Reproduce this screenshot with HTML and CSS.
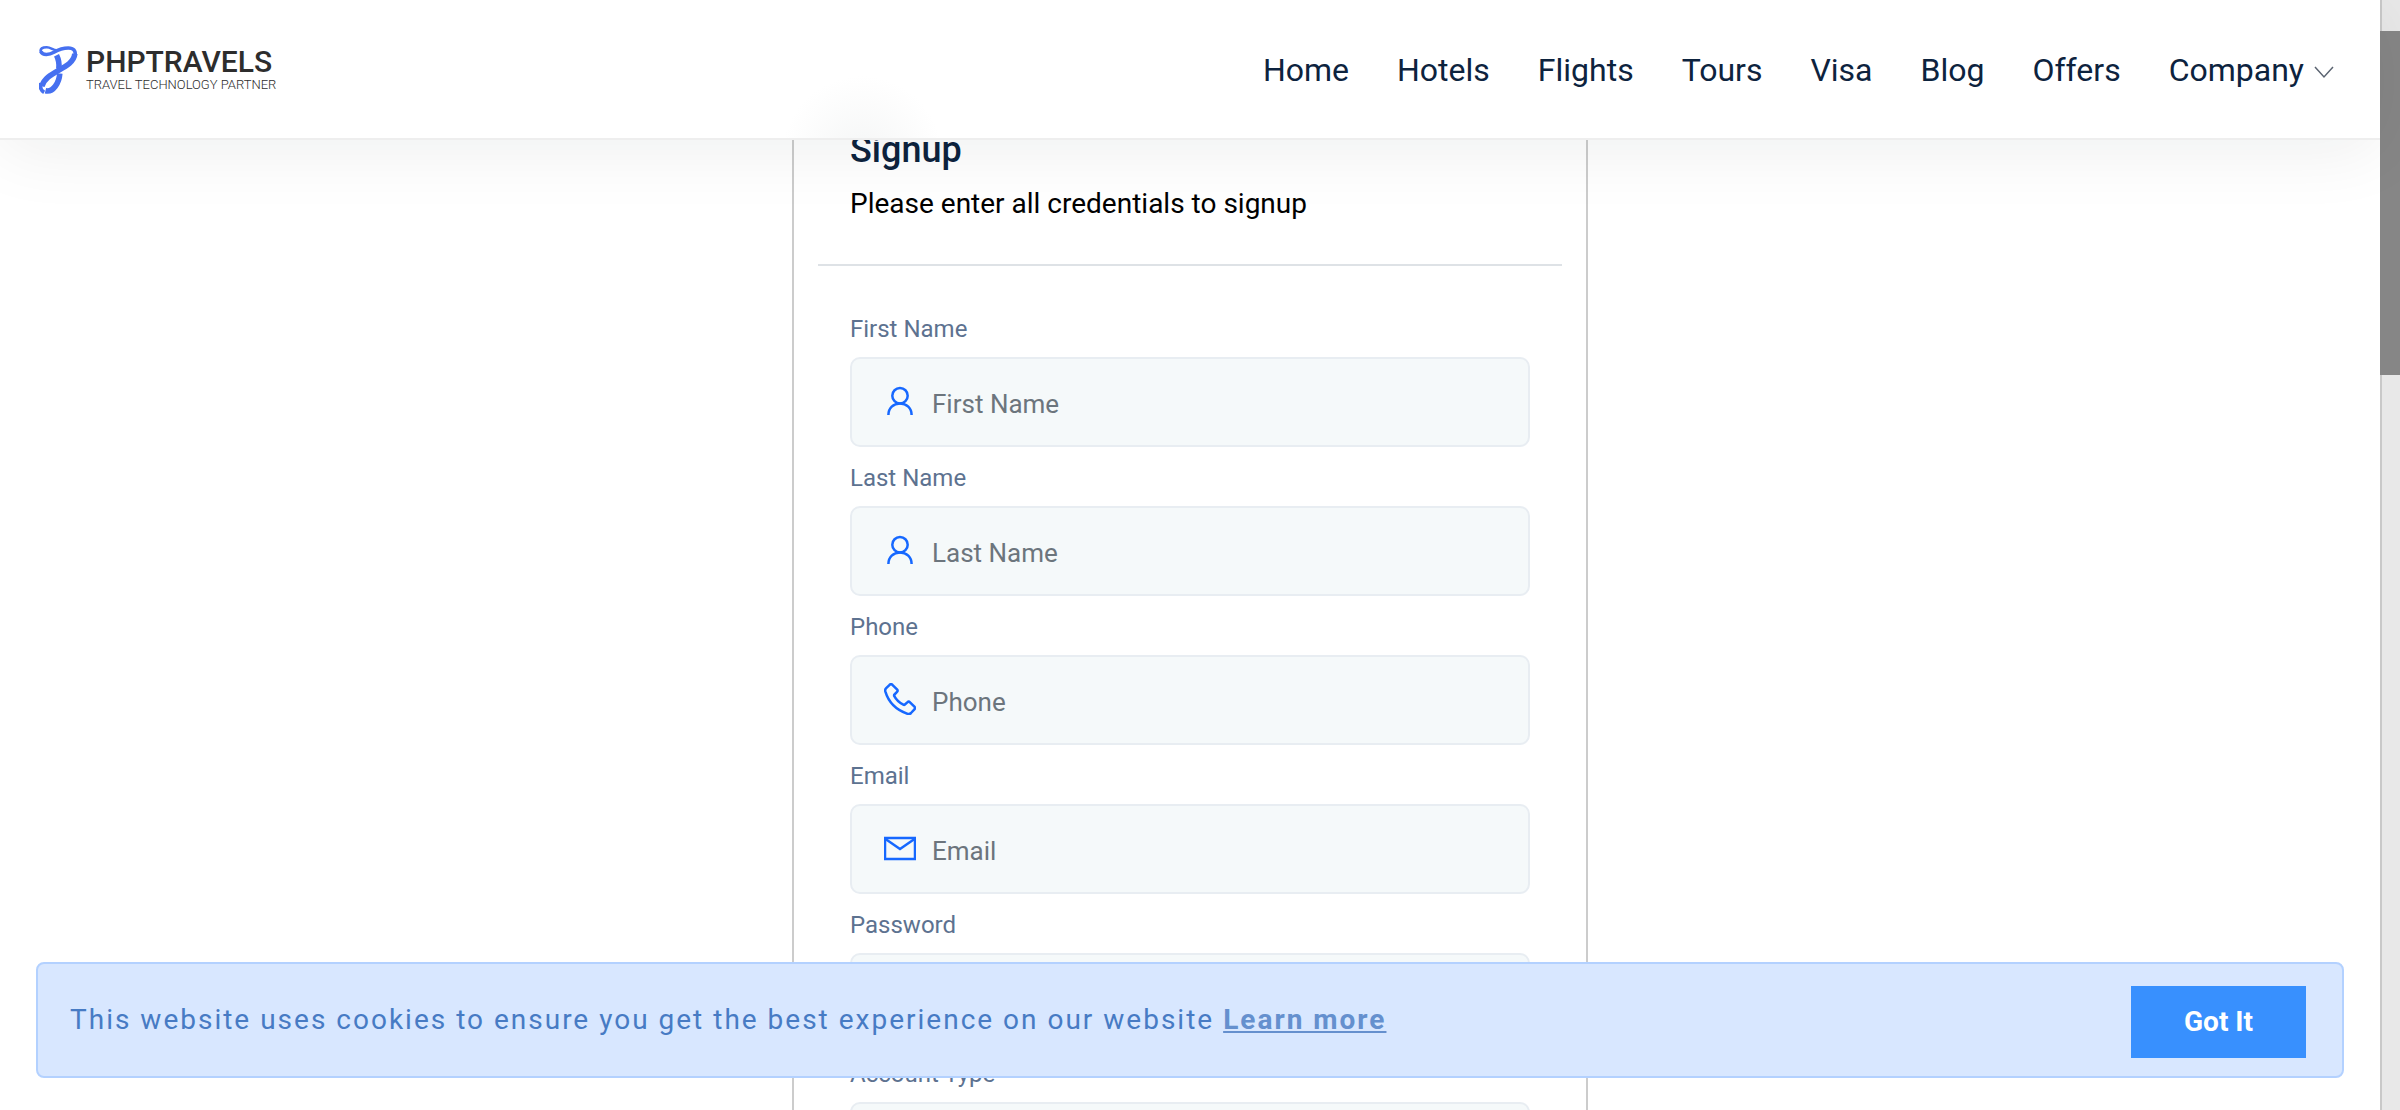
FILE: index.html
```html
<!DOCTYPE html>
<html lang="en">
<head>
<meta charset="utf-8">
<meta name="viewport" content="width=device-width, initial-scale=1">
<title>Signup - PHPTRAVELS</title>
<link rel="stylesheet" href="styles.css">
</head>
<body>
<svg class="sprite" aria-hidden="true">
  <symbol id="icon-user" viewBox="0 0 32 32">
    <circle cx="16" cy="10.7" r="7.7"/>
    <path d="M4.400 30c0-6.800 5-11.500 11.600-11.500S27.600 23.200 27.600 30"/>
  </symbol>
  <symbol id="icon-phone" viewBox="0 0 32 32">
    <path d="M5.600 1.800Q7 .6 8.400 1.800L13 6.400Q14.200 7.700 13 9L10.500 11.500Q9.800 12.200 10.300 13.200C12.500 17.300 15.500 19.800 19.300 21.700Q20.200 22.100 20.900 21.500L23.300 19.300Q24.700 18 26 19.300L30.400 23.600Q31.700 25 30.400 26.400L27 30Q25.600 31.400 23.700 30.900C12 27 4.500 19 1.300 8.400Q.8 6.600 2.200 5.200Z"/>
  </symbol>
  <symbol id="icon-mail" viewBox="0 0 32 32">
    <path d="M1 6h30v21H1z"/><path d="M1.500 7 16 17 30.500 7"/>
  </symbol>
</svg>
<div class="page">
  <header class="header">
    <a class="logo" href="#" aria-label="PHPTRAVELS">
      <svg class="logo-mark" viewBox="17 14 118 147" aria-hidden="true">
        <path class="thin" d="M23 35C17 21 28 18 40 18S60 27 70 27"/>
        <path class="mid" d="M22 31C28 44 48 41 62 33S90 20 106 20S129 28 127 44"/>
        <path class="wide" d="M126 38C121 86 36 90 25 138"/>
        <path class="wide" d="M70 42Q80 62 77 84"/>
        <path class="mid" d="M22 128C17 144 24 151 32 156"/>
        <path class="wide" d="M36 151C60 157 78 126 80 98"/>
      </svg>
      <span class="logo-text">
        <span class="logo-name">PHPTRAVELS</span>
        <span class="logo-tag">TRAVEL TECHNOLOGY PARTNER</span>
      </span>
    </a>
    <nav class="nav">
      <a href="#">Home</a>
      <a href="#">Hotels</a>
      <a href="#">Flights</a>
      <a href="#">Tours</a>
      <a href="#">Visa</a>
      <a href="#">Blog</a>
      <a href="#">Offers</a>
      <a href="#">Company<svg class="chevron" viewBox="0 0 20 18" aria-hidden="true"><path d="M1 6l9 10 9-10"/></svg></a>
    </nav>
  </header>

  <main class="main">
    <form class="card">
      <div class="card-head">
        <h1>Signup</h1>
        <p>Please enter all credentials to signup</p>
      </div>
      <div class="fields">
        <div class="field">
          <label for="first">First Name</label>
          <div class="control"><svg class="icon" aria-hidden="true"><use href="#icon-user"/></svg><input id="first" type="text" placeholder="First Name"></div>
        </div>
        <div class="field">
          <label for="last">Last Name</label>
          <div class="control"><svg class="icon" aria-hidden="true"><use href="#icon-user"/></svg><input id="last" type="text" placeholder="Last Name"></div>
        </div>
        <div class="field">
          <label for="phone">Phone</label>
          <div class="control"><svg class="icon" aria-hidden="true"><use href="#icon-phone"/></svg><input id="phone" type="tel" placeholder="Phone"></div>
        </div>
        <div class="field">
          <label for="email">Email</label>
          <div class="control"><svg class="icon" aria-hidden="true"><use href="#icon-mail"/></svg><input id="email" type="email" placeholder="Email"></div>
        </div>
        <div class="field">
          <label for="password">Password</label>
          <div class="control"><input id="password" type="password"></div>
        </div>
        <div class="field">
          <label for="type">Account Type</label>
          <div class="control"><select id="type"><option></option></select></div>
        </div>
      </div>
    </form>
  </main>

  <div class="cookies" role="status">
    <p>This website uses cookies to ensure you get the best experience on our website <a href="#">Learn more</a></p>
    <button type="button">Got It</button>
  </div>
  <div class="scrollbar" aria-hidden="true"><div class="thumb"></div></div>
</div>
</body>
</html>
```
FILE: styles.css
```css
* { box-sizing: border-box; }
body {
  margin: 0;
  background: #fff;
  font-family: Roboto, "Liberation Sans", sans-serif;
  color: #0d233e;
}
h1, p { margin: 0; }
a { color: inherit; text-decoration: none; }
.sprite { position: absolute; width: 0; height: 0; }

.page {
  position: relative;
  height: 100vh;
  padding-right: 20px;
  overflow: hidden;
}

/* Top bar, over the scrolled form */
.header {
  position: absolute;
  z-index: 2;
  top: 0;
  left: 0;
  right: 20px;
  height: 140px;
  padding: 2px 46px 0 39px;
  display: flex;
  align-items: center;
  justify-content: space-between;
  background: radial-gradient(circle 80px at 862px 156px, #f5f6f6, #fff) #fff;
  border-bottom: 2px solid #eee;
  box-shadow: 0 10px 70px rgba(14, 32, 32, 0.07);
}
.logo { display: flex; align-items: center; gap: 8px; }
.logo-mark { width: 39px; height: 48px; fill: none; stroke: #4670f0; }
.thin { stroke-width: 8; }
.mid { stroke-width: 11; }
.wide { stroke-width: 17; }
.logo-text { display: flex; flex-direction: column; color: #2d2d2d; }
.logo-name { font-size: 30px; line-height: 30px; font-weight: 500; }
.logo-tag { font-size: 13px; line-height: 16px; font-weight: 300; }
.nav { display: flex; gap: 48px; font-size: 32px; line-height: 40px; }
.nav a { display: flex; align-items: center; gap: 10px; }
.chevron { width: 20px; height: 18px; fill: none; stroke: #5b6471; stroke-width: 1.5; }

/* Signup form */
.main { display: flex; justify-content: center; }
.card {
  width: 796px;
  padding: 0 24px;
  border: 2px solid #ccc;
  border-top: 0;
}
.card-head { padding: 128px 32px 38px; border-bottom: 2px solid #dee2e6; }
.card-head h1 { font-size: 36px; line-height: 44px; font-weight: 500; }
.card-head p { margin-top: 10px; font-size: 28px; line-height: 44px; color: #000; }
.fields { padding: 42px 32px; }
.field { display: flex; flex-direction: column; padding-bottom: 10px; }
.field label { padding: 6px 0 13px; font-size: 24px; line-height: 30px; color: #5d7290; }
.control {
  height: 90px;
  padding: 0 32px 2px;
  display: flex;
  align-items: center;
  gap: 16px;
  background: #f5f9fa;
  border: 2px solid #e8edf2;
  border-radius: 10px;
}
.icon { width: 32px; height: 32px; fill: none; stroke: #1668ff; stroke-width: 2.5; }
.control input, .control select {
  flex: 1;
  min-width: 0;
  height: 100%;
  padding: 6px 0 0;
  border: 0;
  outline: 0;
  appearance: none;
  background: transparent;
  font: 26px/32px Roboto, sans-serif;
  color: #5d6975;
}
.control input::placeholder { color: #6c757d; opacity: 1; }

/* Cookie notice */
.cookies {
  position: absolute;
  z-index: 3;
  left: 36px;
  right: 56px;
  bottom: 32px;
  height: 116px;
  padding: 22px 36px 0 32px;
  display: flex;
  align-items: flex-start;
  justify-content: space-between;
  background: #d8e7ff;
  border: 2px solid #b3d1ff;
  border-radius: 8px;
}
.cookies p { padding-top: 14px; font-size: 28px; line-height: 40px; letter-spacing: 2px; color: #477bc4; }
.cookies a { font-weight: 700; color: #6590ce; text-decoration: underline; }
.cookies button {
  width: 175px;
  height: 72px;
  border: 0;
  background: #3890fe;
  color: #fff;
  font: 700 28px/40px Roboto, sans-serif;
}

/* Scroll track */
.scrollbar {
  position: absolute;
  top: 0;
  right: 0;
  bottom: 0;
  width: 20px;
  padding-top: 31px;
  background: linear-gradient(90deg, #c9c9c9 2px, #e8e8e8 2px);
}
.thumb { height: 344px; background: #868686; }
```
